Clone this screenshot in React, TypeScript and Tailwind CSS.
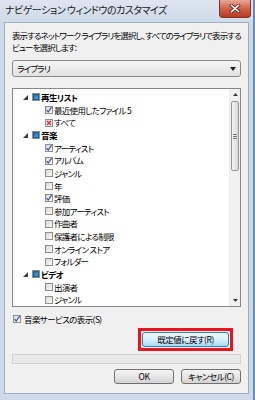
import React from "react";

type State = "parent" | "checked" | "unchecked" | "excluded";
type Item = { label: string; level: 0 | 1; state: State };

const items: Item[] = [
  { label: "再生リスト", level: 0, state: "parent" },
  { label: "最近使用したファイル 5", level: 1, state: "checked" },
  { label: "すべて", level: 1, state: "excluded" },
  { label: "音楽", level: 0, state: "parent" },
  { label: "アーティスト", level: 1, state: "checked" },
  { label: "アルバム", level: 1, state: "checked" },
  { label: "ジャンル", level: 1, state: "unchecked" },
  { label: "年", level: 1, state: "unchecked" },
  { label: "評価", level: 1, state: "checked" },
  { label: "参加アーティスト", level: 1, state: "unchecked" },
  { label: "作曲者", level: 1, state: "unchecked" },
  { label: "保護者による制限", level: 1, state: "unchecked" },
  { label: "オンライン ストア", level: 1, state: "unchecked" },
  { label: "フォルダー", level: 1, state: "unchecked" },
  { label: "ビデオ", level: 0, state: "parent" },
  { label: "出演者", level: 1, state: "unchecked" },
  { label: "ジャンル", level: 1, state: "unchecked" },
];

function Box({ state }: { state: State }) {
  return (
    <span className="relative flex w-[8px] h-[8px] shrink-0 items-center justify-center border border-[#8e8f8f] bg-linear-to-br from-[#d8d8d8] to-[#fafafa]">
      {state === "parent" && (
        <span className="w-[6px] h-[6px] bg-linear-to-br from-[#1d6fb5] to-[#4aa3df] border border-[#1c5e98]" />
      )}
      {state === "checked" && (
        <svg width="8" height="8" viewBox="0 0 8 8" className="absolute left-[-1px] top-[-1px]">
          <path d="M1.6 4.2 L3.2 6 L6.6 1.2" fill="none" stroke="#3a5590" strokeWidth="1.2" />
        </svg>
      )}
      {state === "excluded" && (
        <svg width="8" height="8" viewBox="0 0 8 8" className="absolute left-[-1px] top-[-1px]">
          <path d="M2 2 L6 6 M6 2 L2 6" fill="none" stroke="#d9283a" strokeWidth="1.3" />
        </svg>
      )}
    </span>
  );
}

function Row({ item }: { item: Item }) {
  if (item.level === 0) {
    return (
      <div className="flex h-[12.65px] items-center whitespace-nowrap">
        <span className="w-[10px] pl-[1px] flex items-center">
          <svg width="5" height="5" viewBox="0 0 5 5">
            <path d="M5 0 L5 5 L0 5 Z" fill="#3c3c3c" />
          </svg>
        </span>
        <Box state={item.state} />
        <span className="ml-[1px] font-bold text-[8.5px] tracking-[-0.6px] leading-none text-black">{item.label}</span>
      </div>
    );
  }
  return (
    <div className="flex h-[12.65px] items-center pl-[23px] whitespace-nowrap">
      <Box state={item.state} />
      <span className="ml-[1px] text-[8.5px] tracking-[-0.7px] leading-none text-black">{item.label}</span>
    </div>
  );
}

function Scrollbar() {
  return (
    <div className="w-[11px] h-full flex flex-col bg-[#f1f1f1] border-l border-[#ececec]">
      <div className="h-[11px] flex items-center justify-center">
        <svg width="5" height="3" viewBox="0 0 5 3">
          <path d="M0 3 L2.5 0 L5 3 Z" fill="#3c3c3c" />
        </svg>
      </div>
      <div className="mx-[1px] mt-[1px] h-[70px] rounded-[2px] border border-[#999] bg-linear-to-r from-[#f3f3f3] to-[#d9d9d9] flex flex-col items-center justify-center gap-[1px]">
        <span className="w-[4px] h-px bg-[#777]" />
        <span className="w-[4px] h-px bg-[#777]" />
        <span className="w-[4px] h-px bg-[#777]" />
      </div>
      <div className="flex-1" />
      <div className="h-[11px] flex items-center justify-center">
        <svg width="5" height="3" viewBox="0 0 5 3">
          <path d="M0 0 L5 0 L2.5 3 Z" fill="#3c3c3c" />
        </svg>
      </div>
    </div>
  );
}

function Button({ children, className = "" }: { children: React.ReactNode; className?: string }) {
  return (
    <div
      className={
        "flex items-center justify-center rounded-[3px] border border-[#707070] bg-linear-to-b from-[#f4f4f4] via-[#e6e6e6] to-[#d3d3d3] text-[8.5px] tracking-[-0.5px] text-black " +
        className
      }
    >
      {children}
    </div>
  );
}

export default function App() {
  return (
    <div className="w-[255px] h-[400px] bg-[#cdd9e6] flex flex-col overflow-hidden [font-family:'Noto_Sans_CJK_JP',sans-serif] [font-feature-settings:'palt'] border-r-2 border-[#6d8bb0]">
      {/* title bar */}
      <div className="h-[22px] flex shrink-0 bg-linear-to-b from-[#dde6f0] to-[#cfdbe8]">
        <div className="flex-1 pl-[5px] pt-[5px] text-[10px] tracking-[-0.5px] leading-none text-[#1a1a1a] whitespace-nowrap">
          ナビゲーション ウィンドウのカスタマイズ
        </div>
        <div className="w-[32px] h-[18px] mr-[2px] rounded-b-[4px] border border-t-0 border-[#7c3527] bg-linear-to-b from-[#e7a795] via-[#d2624c] to-[#b9391f] flex items-center justify-center">
          <svg width="12" height="9" viewBox="0 0 12 9">
            <path d="M2.5 1.5 L9.5 7.5 M9.5 1.5 L2.5 7.5" stroke="#5a2418" strokeWidth="3.2" strokeLinecap="square" />
            <path d="M2.5 1.5 L9.5 7.5 M9.5 1.5 L2.5 7.5" stroke="#ffffff" strokeWidth="1.6" strokeLinecap="square" />
          </svg>
        </div>
      </div>

      {/* client area */}
      <div className="ml-[4px] mr-[4px] h-[372px] border border-[#9fb0c2] bg-[#f0f0f0] flex flex-col px-[7px]">
        <div className="mt-[6px] text-[8.5px] leading-[12px] text-black whitespace-nowrap tracking-[-0.9px]">
          <div>表示するネットワーク ライブラリを選択し、すべてのライブラリで表示する</div>
          <div>ビューを選択します:</div>
        </div>

        {/* dropdown */}
        <div className="mt-[7px] h-[17px] rounded-[3px] border border-[#8a8a8a] bg-linear-to-b from-[#f5f5f5] to-[#e2e2e2] flex items-center pl-[4px] pr-[4px]">
          <span className="flex-1 text-[8.5px] tracking-[-0.7px] leading-none text-black">ライブラリ</span>
          <svg width="6" height="4" viewBox="0 0 6 4">
            <path d="M0 0 L6 0 L3 4 Z" fill="#1a1a1a" />
          </svg>
        </div>

        {/* tree list */}
        <div className="mt-[11px] h-[219px] border border-[#828790] bg-white flex">
          <div className="flex-1 pt-[2px] pl-[9px] overflow-hidden">
            {items.map((it, i) => (
              <Row key={i} item={it} />
            ))}
          </div>
          <Scrollbar />
        </div>

        {/* music service checkbox */}
        <div className="mt-[8px] flex items-center pl-[1px]">
          <Box state="checked" />
          <span className="ml-[3px] text-[8.5px] tracking-[-0.6px] leading-none text-black">音楽サービスの表示(S)</span>
        </div>

        {/* restore defaults */}
        <div className="mt-[4px] flex justify-end pr-[8px]">
          <div className="border-[3px] border-[#e8141e] p-[1px]">
            <div className="w-[87px] h-[15px] rounded-[3px] border border-[#3c7fb1] bg-linear-to-b from-[#eaf6fd] via-[#d9f0fc] to-[#a7d9f5] flex items-center justify-center text-[8.5px] tracking-[-0.5px] text-black">
              既定値に戻す(R)
            </div>
          </div>
        </div>

        {/* empty bar */}
        <div className="mt-[3px] h-[10px] border border-[#d2d2d2] bg-[#e9e9e9]" />

        {/* OK / Cancel */}
        <div className="mt-[5px] flex justify-end gap-[7px]">
          <Button className="w-[60px] h-[15px]">OK</Button>
          <Button className="w-[60px] h-[15px]">キャンセル(C)</Button>
        </div>
      </div>
    </div>
  );
}
